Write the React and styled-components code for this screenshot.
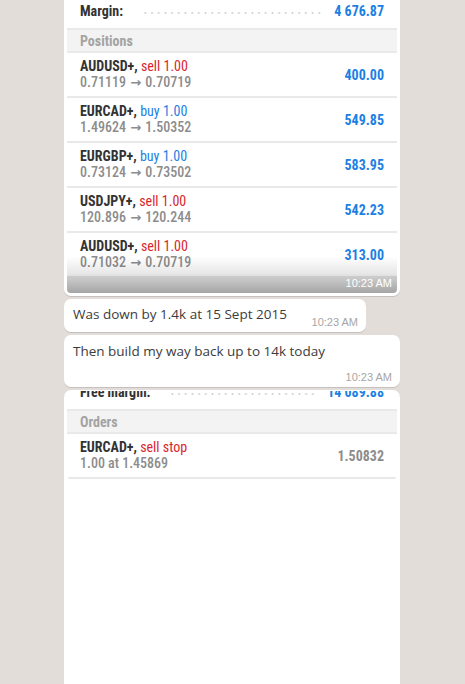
import React from "react";
import styled, { createGlobalStyle } from "styled-components";

const GlobalStyle = createGlobalStyle`
  html, body {
    margin: 0;
    padding: 0;
  }
  body {
    background: #e3ddd9;
    overflow: hidden;
  }
`;

const Page = styled.div`
  height: 684px;
  overflow: hidden;
  padding-left: 64px;
`;

const Thread = styled.div`
  width: 336px;
  display: flex;
  flex-direction: column;
  gap: 3px;
  margin-top: -10px;
`;

const Bubble = styled.div`
  position: relative;
  background: #fff;
  border-radius: 7px;
  box-shadow: 0 1px 0.5px rgba(0, 0, 0, 0.13);
  padding: ${(p) => (p.$top ? `${p.$top}px` : "3px")} 3px 3px;
  width: ${(p) => p.$width || "336px"};
  min-height: ${(p) => p.$minHeight || "auto"};
  box-sizing: border-box;
`;

const Shot = styled.div`
  position: relative;
  overflow: hidden;
  border-radius: 4px;
  background: #fff;
  font-family: Roboto, "Liberation Sans", sans-serif;
  font-stretch: 82%;
  -webkit-font-smoothing: antialiased;
`;

const ShotInner = styled.div`
  margin-top: ${(p) => p.$offset || 0}px;
`;

const SummaryRow = styled.div`
  height: 35px;
  display: flex;
  align-items: center;
  padding: 0 13px;
  font-size: 14px;
  font-weight: 700;
  color: #333;
`;

const Leader = styled.span`
  flex: 1;
  height: 4px;
  margin: 4px 12px 0 19px;
  background-image: radial-gradient(circle at center, #cfcfcf 0.8px, rgba(255, 255, 255, 0) 1.2px);
  background-size: 6.7px 4px;
  background-repeat: repeat-x;
  background-position: left center;
`;

const Value = styled.span`
  font-size: 14px;
  font-weight: 700;
  color: ${(p) => p.$color || "#1d7fe3"};
`;

const Sep = styled.div`
  height: 2px;
  background: #e9e9e9;
`;

const SectionHead = styled.div`
  height: 21px;
  display: flex;
  align-items: center;
  padding: 0 13px;
  background: #f3f3f3;
  font-size: 14px;
  font-weight: 700;
  color: #a3a3a3;
`;

const Row = styled.div`
  height: 43px;
  display: flex;
  align-items: center;
  justify-content: space-between;
  padding: 0 13px;
`;

const RowText = styled.div`
  display: flex;
  flex-direction: column;
  line-height: 15.5px;
  font-size: 14px;
`;

const Symbol = styled.span`
  font-weight: 700;
  color: #333;
`;

const Side = styled.span`
  font-weight: 400;
  color: ${(p) => (p.$buy ? "#1d7fe3" : "#d9262b")};
`;

const Prices = styled.span`
  font-weight: 500;
  color: #8c8c8c;
`;

const Arrow = styled.span`
  font-family: "DejaVu Sans", sans-serif;
  font-stretch: normal;
  font-size: 13px;
  font-weight: 700;
  margin: 0 1px;
`;

const FooterStrip = styled.div`
  height: 15px;
  background: #ececec;
`;

const Overlay = styled.div`
  position: absolute;
  left: 0;
  right: 0;
  bottom: 0;
  height: 34px;
  display: flex;
  align-items: flex-end;
  justify-content: flex-end;
  padding: 0 5px 3px 0;
  background: linear-gradient(
    180deg,
    rgba(0, 0, 0, 0) 0,
    rgba(0, 0, 0, 0.09) 17px,
    rgba(0, 0, 0, 0.3) 100%
  );
`;

const Time = styled.span`
  font-family: "Liberation Sans", Arial, sans-serif;
  font-size: 11px;
  line-height: 13px;
  color: ${(p) => (p.$light ? "#ffffff" : "#a6a6a6")};
  font-stretch: normal;
`;

const TextBubble = styled(Bubble)`
  padding: ${(p) => (p.$stacked ? "7px 8px 3px 9px" : "6px 8px 3px 9px")};
  display: flex;
  flex-direction: ${(p) => (p.$stacked ? "column" : "row")};
  align-items: ${(p) => (p.$stacked ? "stretch" : "flex-end")};
  justify-content: space-between;
  gap: ${(p) => (p.$stacked ? "11px" : "14px")};
  ${Time} {
    align-self: flex-end;
  }
`;

const Message = styled.span`
  font-family: "Open Sans", "Noto Sans", sans-serif;
  font-size: 13.5px;
  line-height: 18px;
  color: #3c3c3c;
  align-self: flex-start;
  margin-bottom: ${(p) => (p.$inline ? "6px" : "0")};
`;

const positions = [
  { sym: "AUDUSD+", side: "sell", from: "0.71119", to: "0.70719", pl: "400.00" },
  { sym: "EURCAD+", side: "buy", from: "1.49624", to: "1.50352", pl: "549.85" },
  { sym: "EURGBP+", side: "buy", from: "0.73124", to: "0.73502", pl: "583.95" },
  { sym: "USDJPY+", side: "sell", from: "120.896", to: "120.244", pl: "542.23" },
  { sym: "AUDUSD+", side: "sell", from: "0.71032", to: "0.70719", pl: "313.00" },
];

function TradeRow({ sym, side, sub, value, valueColor }) {
  return (
    <Row>
      <RowText>
        <span>
          <Symbol>{sym}, </Symbol>
          <Side $buy={side.startsWith("buy")}>{side}</Side>
        </span>
        <Prices>{sub}</Prices>
      </RowText>
      <Value $color={valueColor}>{value}</Value>
    </Row>
  );
}

export default function App() {
  return (
    <Page>
      <GlobalStyle />
      <Thread>
        <Bubble>
          <Shot>
            <ShotInner>
              <SummaryRow>
                Margin:
                <Leader />
                <Value>4 676.87</Value>
              </SummaryRow>
              <Sep />
              <SectionHead>Positions</SectionHead>
              <Sep />
              {positions.map((p, i) => (
                <React.Fragment key={i}>
                  <TradeRow
                    sym={p.sym}
                    side={`${p.side} 1.00`}
                    sub={
                      <>
                        {p.from} <Arrow>→</Arrow> {p.to}
                      </>
                    }
                    value={p.pl}
                  />
                  <Sep />
                </React.Fragment>
              ))}
              <FooterStrip />
            </ShotInner>
            <Overlay>
              <Time $light>10:23 AM</Time>
            </Overlay>
          </Shot>
        </Bubble>

        <TextBubble $width="302px">
          <Message $inline>Was down by 1.4k at 15 Sept 2015</Message>
          <Time>10:23 AM</Time>
        </TextBubble>

        <TextBubble $stacked>
          <Message>Then build my way back up to 14k today</Message>
          <Time>10:23 AM</Time>
        </TextBubble>

        <Bubble $top={1} $minHeight="400px">
          <Shot>
            <ShotInner $offset={-17}>
              <SummaryRow>
                Free margin:
                <Leader />
                <Value>14 089.88</Value>
              </SummaryRow>
              <Sep />
              <SectionHead>Orders</SectionHead>
              <Sep />
              <TradeRow
                sym="EURCAD+"
                side="sell stop"
                sub="1.00 at 1.45869"
                value="1.50832"
                valueColor="#8c8c8c"
              />
              <Sep />
            </ShotInner>
          </Shot>
        </Bubble>
      </Thread>
    </Page>
  );
}
